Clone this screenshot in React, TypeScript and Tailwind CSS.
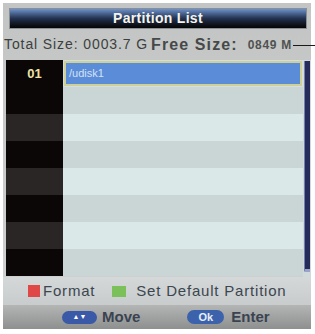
import React from "react";

const rows = [
  { num: "01", name: "/udisk1" },
  { num: "", name: "" },
  { num: "", name: "" },
  { num: "", name: "" },
  { num: "", name: "" },
  { num: "", name: "" },
  { num: "", name: "" },
  { num: "", name: "" },
];

export default function App() {
  return (
    <div
      className="w-[315px] h-[334px] bg-white pt-[3px] pl-[3px] overflow-hidden"
      style={{ fontFamily: '"Liberation Sans", Arial, sans-serif' }}
    >
      <div className="w-[308px] h-[326px] flex flex-col bg-gradient-to-b from-[#c2c5c3] to-[#cfd2d1]">
        {/* title bar */}
        <div className="mt-[5px] ml-[6px] mr-[4px] h-[21px] border border-[#8a8f94] bg-gradient-to-b from-[#6f93cc] via-[#23324f] to-[#050505] flex items-center justify-center">
          <span className="text-[14px] font-bold text-[#f4f4ee] tracking-[0.3px]">Partition List</span>
        </div>

        {/* size info */}
        <div className="h-[31px] flex items-center pl-[1px] text-[#3d3f3f] whitespace-nowrap">
          <span className="text-[14px] tracking-[0.9px]">Total Size: 0003.7 G</span>
          <span className="text-[16px] font-bold ml-[3px] tracking-[1.1px] text-[#474949]">Free Size:</span>
          <span className="text-[12px] font-bold ml-[10px] tracking-[0.7px] text-[#505252]">0849 M</span>
          <div className="w-[24px] h-[1.5px] bg-[#1a1a1a] ml-[1px] mt-[2px] mr-[-12px] shrink-0" />
        </div>

        {/* list */}
        <div className="h-[217px] flex ml-[3px]">
          <div className="w-[57px] flex flex-col">
            {rows.map((r, i) => (
              <div
                key={i}
                className={`h-[27px] flex items-center justify-center text-[13px] font-bold text-[#f0e3a8] ${
                  i % 2 === 0 && i > 0 ? "bg-[#2a2625]" : "bg-[#0b0707]"
                }`}
              >
                {r.num}
              </div>
            ))}
          </div>
          <div className="w-[240px] flex flex-col">
            {rows.map((r, i) =>
              i === 0 ? (
                <div key={i} className="h-[27px] bg-[#d3dfdf] px-[1px] py-[1px]">
                  <div className="h-full border-2 border-[#cfcf98] bg-[#5b8cd8] flex items-center pl-[3px] text-[11px] text-[#d4e2f5]">
                    {r.name}
                  </div>
                </div>
              ) : (
                <div key={i} className={`h-[27px] ${i % 2 === 1 ? "bg-[#c9d6d5]" : "bg-[#dae8e7]"}`} />
              )
            )}
          </div>
          <div className="w-[8px] pt-[1px] pb-[5px] flex justify-center bg-[#d0dada]">
            <div className="w-[6px] h-full bg-[#262c5a] border-l border-[#7480b0] rounded-b-[2px] flex flex-col justify-end">
              <div className="h-[3px] bg-[#9aa4c8]" />
            </div>
          </div>
        </div>

        {/* color key hints */}
        <div className="h-[28px] flex items-center pl-[25px] text-[15px] tracking-[0.8px] text-[#3c4650] bg-gradient-to-b from-[#d4d8d8] to-[#c8cccc]">
          <span className="w-[12px] h-[12px] bg-[#e04848] mr-[3px]" />
          <span>Format</span>
          <span className="w-[14px] h-[11px] bg-[#7cc05a] ml-[17px] mr-[10px]" />
          <span>Set Default Partition</span>
        </div>

        {/* nav hints */}
        <div className="flex-1 flex items-center bg-gradient-to-b from-[#b4b6b6] to-[#8e9090] text-[15px] font-bold text-[#3a4350]">
          <span className="ml-[59px] w-[35px] h-[13px] rounded-full bg-[#3a5aa8] flex items-center justify-center text-[7px] text-white">
            ▲▼
          </span>
          <span className="ml-[5px]">Move</span>
          <span className="ml-[47px] w-[37px] h-[14px] rounded-full bg-[#3d62ac] flex items-center justify-center text-[11px] text-[#e8eef8]">
            Ok
          </span>
          <span className="ml-[7px]">Enter</span>
        </div>
      </div>
    </div>
  );
}
